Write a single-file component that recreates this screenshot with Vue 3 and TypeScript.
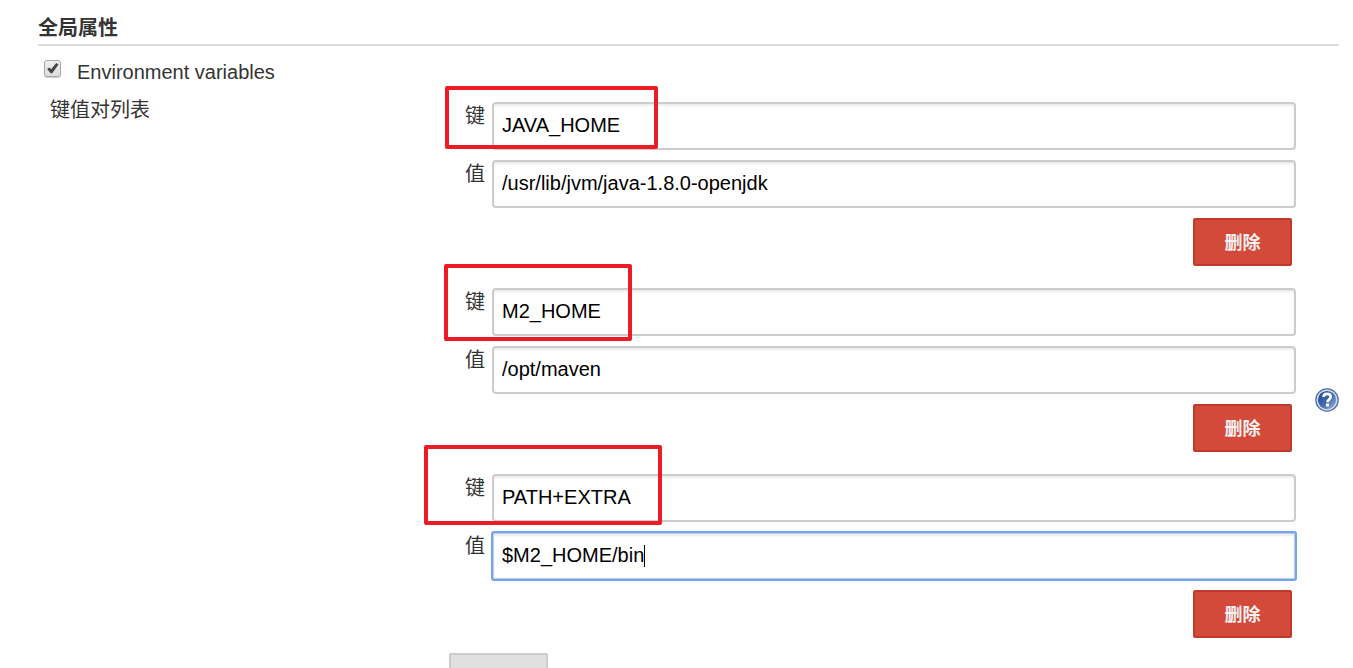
<script setup lang="ts">
import { onMounted, ref } from 'vue'

interface Variable {
  key: string
  value: string
  mark: string
}

const enabled = ref(true)
const variables = ref<Variable[]>([
  { key: 'JAVA_HOME', value: '/usr/lib/jvm/java-1.8.0-openjdk', mark: 'mark-java' },
  { key: 'M2_HOME', value: '/opt/maven', mark: 'mark-maven' },
  { key: 'PATH+EXTRA', value: '$M2_HOME/bin', mark: 'mark-path' },
])
const list = ref<HTMLElement | null>(null)
const focused = ref(-1)

function remove(index: number) {
  variables.value.splice(index, 1)
}

function add() {
  variables.value.push({ key: '', value: '', mark: '' })
}

onMounted(() => {
  const input = list.value?.querySelector<HTMLInputElement>('#value-2')
  input?.focus({ preventScroll: true })
  input?.setSelectionRange(input.value.length, input.value.length)
})
</script>

<template>
  <main class="page">
    <h1 class="title">全局属性</h1>
    <div class="toggle">
      <input id="env" v-model="enabled" class="check" type="checkbox" />
      <label for="env">Environment variables</label>
    </div>
    <div class="body">
      <div class="caption">键值对列表</div>
      <div ref="list" class="list">
        <section v-for="(item, i) in variables" :key="i" class="group">
          <div class="row">
            <label class="name" :for="`key-${i}`">键</label>
            <input :id="`key-${i}`" v-model="item.key" class="field" type="text" spellcheck="false" />
          </div>
          <div class="row">
            <label class="name" :for="`value-${i}`">值</label>
            <div class="holder">
              <input
                :id="`value-${i}`"
                v-model="item.value"
                class="field"
                type="text"
                spellcheck="false"
                @focus="focused = i"
                @blur="focused = -1"
              />
              <div v-if="focused === i" class="caret-line" aria-hidden="true">
                <span class="spacer">{{ item.value }}</span><i class="caret"></i>
              </div>
            </div>
          </div>
          <button class="delete" type="button" @click="remove(i)">删除</button>
          <span v-if="item.mark" class="mark" :class="item.mark"></span>
        </section>
        <button class="add" type="button" aria-label="Add" @click="add"></button>
      </div>
      <a class="help" href="#" aria-label="Help">
        <svg width="24" height="24" viewBox="0 0 24 24">
          <defs>
            <linearGradient id="disc" x1="0" y1="0" x2="1" y2="1">
              <stop offset="0" stop-color="#1f4686" />
              <stop offset="0.5" stop-color="#4068a8" />
              <stop offset="1" stop-color="#9dbbe0" />
            </linearGradient>
          </defs>
          <circle cx="12" cy="12" r="11.8" fill="#4a6fa8" />
          <circle cx="12" cy="12" r="9.8" fill="url(#disc)" stroke="#d0dced" stroke-width="1.4" />
          <path d="M8.5 9C8.6 6.9 10 5.9 12.1 5.9c2.2 0 3.6 1.1 3.6 2.9 0 2.6-3.2 2.7-3.2 5.4" fill="none" stroke="#fff" stroke-width="2.6" />
          <rect x="11" y="15.6" width="3" height="2.9" rx="0.5" fill="#fff" />
        </svg>
      </a>
    </div>
  </main>
</template>

<style>
body {
  margin: 0;
  background: #fff;
}
</style>

<style scoped>
.page {
  box-sizing: border-box;
  height: 100vh;
  overflow: hidden;
  padding: 12px 14px 0 38px;
  color: #333;
  font: 20px/24px "Liberation Sans", Arial, "Noto Sans CJK SC", sans-serif;
}
.title {
  margin: 0;
  border-bottom: 2px solid #ddd;
  font-size: 20px;
  line-height: 32px;
  font-weight: 700;
}
.toggle {
  display: flex;
  align-items: flex-start;
  gap: 16px;
  padding: 14px 0 0 6px;
}
.check {
  appearance: none;
  box-sizing: border-box;
  width: 17px;
  height: 17px;
  margin: 0;
  border: 1px solid #a8a8a8;
  border-radius: 3px;
  background: linear-gradient(#eee, #ddd);
  box-shadow: 0 1px 1px #ccc;
}
.check:checked::before {
  content: "";
  display: block;
  width: 15px;
  height: 15px;
  background: #444;
  clip-path: polygon(14% 54%, 29% 43%, 41% 55%, 75% 13%, 90% 24%, 48% 82%, 38% 82%);
}
.body {
  display: grid;
  grid-template-columns: 411px 1fr 24px;
  padding-top: 14px;
}
.caption {
  padding-left: 12px;
}
.list {
  min-width: 0;
  padding: 4px 19px 0 0;
}
.group {
  position: relative;
  display: flex;
  flex-direction: column;
  gap: 10px;
  margin-bottom: 22px;
}
.group:last-of-type {
  margin-bottom: 15px;
}
.row {
  display: flex;
  gap: 7px;
  padding-left: 16px;
}
.name {
  width: 20px;
  padding-top: 2px;
}
.holder {
  position: relative;
  display: flex;
  flex: 1;
}
.field {
  box-sizing: border-box;
  flex: 1;
  min-width: 0;
  height: 48px;
  margin: 0;
  padding: 0 8px 2px;
  border: 2px solid #ccc;
  border-radius: 4px;
  background: #fff;
  box-shadow: inset 0 2px 2px rgba(0, 0, 0, 0.075);
  color: #000;
  font: inherit;
}
.field:focus {
  border-radius: 2px;
  outline: 2px solid #6fa3f5;
  outline-offset: -1px;
  caret-color: transparent;
}
.caret-line {
  position: absolute;
  inset: 0 10px;
  display: flex;
  align-items: center;
  overflow: hidden;
  pointer-events: none;
  white-space: pre;
}
.spacer {
  visibility: hidden;
}
.caret {
  width: 1px;
  height: 22px;
  background: #000;
}
.delete,
.add {
  box-sizing: border-box;
  width: 99px;
  height: 48px;
  padding: 2px 0 0;
  border: 2px solid #c03a2b;
  border-radius: 2px;
  background: #d34a3a;
  color: #f2f2f2;
  font: 700 18px/24px "Liberation Sans", Arial, "Noto Sans CJK SC", sans-serif;
}
.delete {
  align-self: flex-end;
  margin-right: 4px;
}
.add {
  display: block;
  border-color: #ccc;
  background: #e0e0e0;
}
.help {
  align-self: center;
  height: 24px;
}
.help svg {
  display: block;
}
.mark {
  position: absolute;
  box-sizing: border-box;
  border: 4px solid #ed1c24;
  border-radius: 2px;
  pointer-events: none;
}
.mark-java {
  left: -4px;
  top: -16px;
  width: 213px;
  height: 63px;
}
.mark-maven {
  left: -5px;
  top: -24px;
  width: 188px;
  height: 77px;
}
.mark-path {
  left: -25px;
  top: -29px;
  width: 238px;
  height: 80px;
}
</style>
